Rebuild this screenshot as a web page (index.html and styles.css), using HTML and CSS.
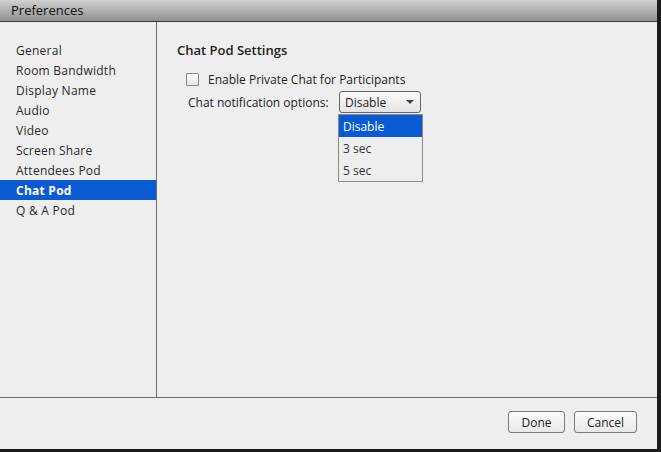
FILE: index.html
```html
<!DOCTYPE html>
<html lang="en">
<head>
    <meta charset="UTF-8">
    <title>Preferences</title>
    <link rel="stylesheet" href="styles.css">
</head>
<body>

    <div class="window">
        <div class="titlebar">Preferences</div>

        <div class="content">
            <ul class="nav">
                <li class="nav-item">General</li>
                <li class="nav-item">Room Bandwidth</li>
                <li class="nav-item">Display Name</li>
                <li class="nav-item">Audio</li>
                <li class="nav-item">Video</li>
                <li class="nav-item">Screen Share</li>
                <li class="nav-item">Attendees Pod</li>
                <li class="nav-item active">Chat Pod</li>
                <li class="nav-item">Q &amp; A Pod</li>
            </ul>

            <div class="panel">
                <h2 class="panel-title">Chat Pod Settings</h2>

                <label class="check-row">
                    <span class="checkbox"></span>
                    Enable Private Chat for Participants
                </label>

                <div class="option-row">
                    <span class="option-label">Chat notification options:</span>
                    <div class="select-wrap">
                        <div class="select">
                            <span>Disable</span>
                            <svg class="arrow" width="8" height="4" viewBox="0 0 8 4">
                                <path d="M0 0 L8 0 L4 4 Z" fill="#444"/>
                            </svg>
                        </div>
                        <ul class="dropdown">
                            <li class="dropdown-item selected">Disable</li>
                            <li class="dropdown-item">3 sec</li>
                            <li class="dropdown-item">5 sec</li>
                        </ul>
                    </div>
                </div>
            </div>
        </div>

        <div class="footer">
            <button class="button">Done</button>
            <button class="button cancel">Cancel</button>
        </div>
    </div>

</body>
</html>
```

FILE: styles.css
```css
body {
    margin: 0;
    background-color: #1c1c1c;
    font-family: "Open Sans", "DejaVu Sans", sans-serif;
    font-size: 12px;
    color: #222;
}

.window {
    width: 657px;
    height: 449px;
    background-color: #eeeeee;
    display: flex;
    flex-direction: column;
}

.titlebar {
    height: 21px;
    line-height: 21px;
    padding-left: 11px;
    font-size: 13px;
    color: #111;
    background: linear-gradient(#d2d2d2, #8f8f8f);
    border-bottom: 1px solid #3a3a3a;
}

.content {
    display: flex;
    height: 375px;
    border-bottom: 1px solid #6e6e6e;
}

.nav {
    list-style: none;
    margin: 0;
    padding: 18px 0 0;
    width: 156px;
    border-right: 1px solid #6e6e6e;
}

.nav-item {
    height: 20px;
    line-height: 21px;
    padding-left: 16px;
    letter-spacing: 0.25px;
    color: #2a2a2a;
}

.nav-item.active {
    background-color: #0a5bd3;
    color: #fff;
    font-weight: bold;
}

.panel {
    flex: 1;
    padding: 18px 0 0 20px;
}

.panel-title {
    margin: 0;
    height: 20px;
    line-height: 21px;
    font-size: 13px;
    font-weight: 600;
    color: #222;
}

.check-row {
    display: flex;
    align-items: center;
    height: 18px;
    margin: 10px 0 0 9px;
}

.checkbox {
    width: 11px;
    height: 11px;
    border: 1px solid #888;
    border-radius: 1px;
    background: linear-gradient(#fdfdfd, #e6e6e6);
    margin-right: 9px;
}

.option-row {
    display: flex;
    align-items: center;
    margin: 3px 0 0 11px;
}

.option-label {
    width: 151px;
}

.select-wrap {
    position: relative;
}

.select {
    width: 70px;
    height: 20px;
    padding: 0 5px;
    display: flex;
    align-items: center;
    justify-content: space-between;
    border: 1px solid #666;
    border-radius: 3px;
    background: linear-gradient(#fafafa, #e4e4e4);
}

.arrow {
    margin-right: 1px;
}

.dropdown {
    position: absolute;
    top: 23px;
    left: -1px;
    width: 83px;
    margin: 0;
    padding: 0;
    list-style: none;
    background-color: #eeeeee;
    border: 1px solid #8a8a8a;
}

.dropdown-item {
    height: 22px;
    line-height: 23px;
    padding-left: 4px;
    color: #333;
}

.dropdown-item.selected {
    background-color: #0a5bd3;
    color: #fff;
}

.footer {
    flex: 1;
    display: flex;
    justify-content: flex-end;
    align-items: flex-start;
    gap: 9px;
    padding: 13px 20px 0 0;
}

.button {
    height: 22px;
    width: 57px;
    padding: 0;
    font-family: inherit;
    font-size: 12px;
    color: #222;
    border: 1px solid #7a7a7a;
    border-radius: 3px;
    background: linear-gradient(#fbfbfb, #e8e8e8);
}

.button.cancel {
    width: 63px;
}
```
